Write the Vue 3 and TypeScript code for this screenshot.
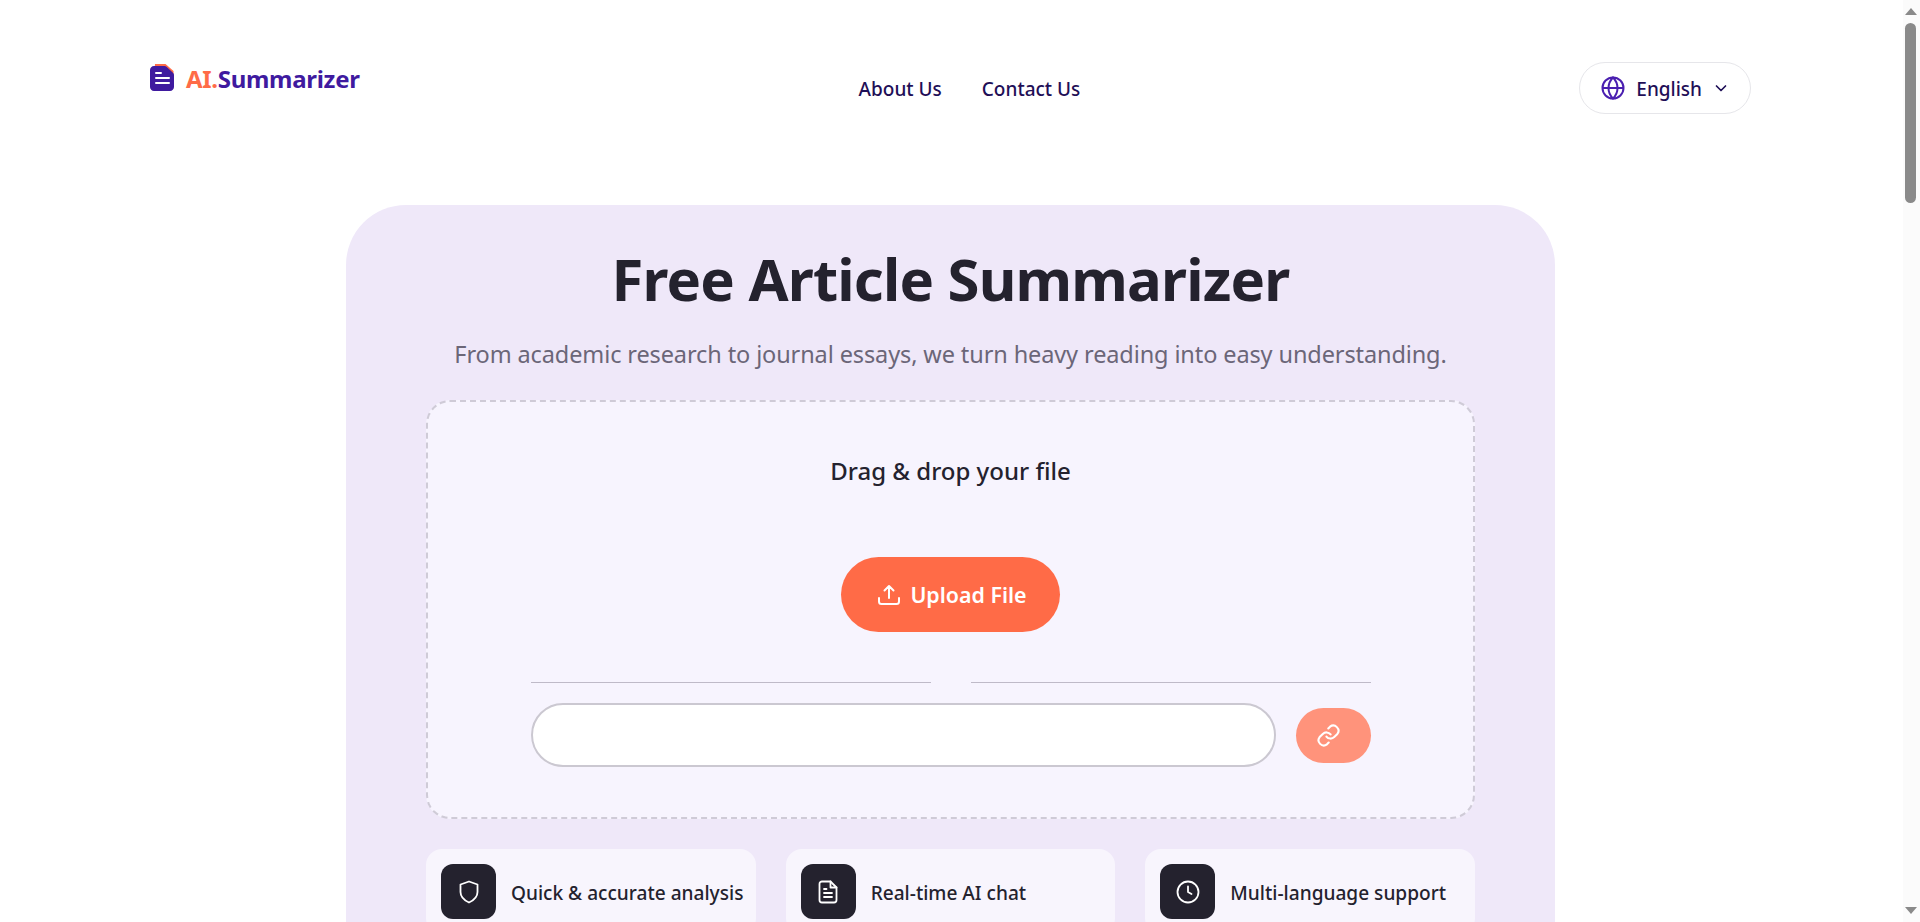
<template>
  <div class="page">
    <header class="topbar">
      <a class="logo" href="#">
        <svg class="logo-icon" width="25" height="28" viewBox="0 0 25 28" aria-hidden="true">
          <path d="M5 0h10.500l8 7v5H4z" fill="#ff6b47" />
          <path d="M4 2h10.500c.8 0 1.500.3 2 .8l6.700 6.200c.5.5.8 1.200.8 2V23c0 2.200-1.800 4-4 4H4c-2.200 0-4-1.800-4-4V6c0-2.200 1.800-4 4-4z" fill="#3f1a9f" />
          <path d="M6 9h5M6 14h13M6 19h13" stroke="#fff" stroke-width="2" stroke-linecap="round" fill="none" />
        </svg>
        <span class="logo-text"><span class="logo-ai">AI.</span>Summarizer</span>
      </a>
      <nav class="nav">
        <a href="#">About Us</a>
        <a href="#">Contact Us</a>
      </nav>
      <button class="lang" type="button">
        <svg width="24" height="24" viewBox="0 0 24 24" fill="none" stroke="#4a1fb0" stroke-width="2" aria-hidden="true">
          <circle cx="12" cy="12" r="10.500" />
          <path d="M1.500 12h21M12 1.500c3 3 4.500 6.500 4.500 10.500s-1.500 7.500-4.500 10.500c-3-3-4.500-6.500-4.500-10.500S9 4.500 12 1.500z" />
        </svg>
        <span class="lang-label">English</span>
        <svg class="chev" width="14" height="14" viewBox="0 0 14 14" fill="none" stroke="#1f0f57" stroke-width="1.700" stroke-linecap="round" stroke-linejoin="round" aria-hidden="true">
          <path d="M2.500 5l4.500 4.500L11.500 5" />
        </svg>
      </button>
    </header>

    <main class="hero">
      <h1>Free Article Summarizer</h1>
      <p class="sub">From academic research to journal essays, we turn heavy reading into easy understanding.</p>

      <section class="drop">
        <div class="drop-title">Drag &amp; drop your file</div>
        <button class="upload" type="button">
          <svg width="24" height="24" viewBox="0 0 24 24" fill="none" stroke="#fff" stroke-width="2" stroke-linecap="round" stroke-linejoin="round" aria-hidden="true">
            <path d="M12 15V3.500M7.500 7.500L12 3l4.500 4.500M2 15v3.500C2 20 3 21 4.500 21h15c1.500 0 2.500-1 2.500-2.500V15" />
          </svg>
          Upload File
        </button>
        <div class="or"><span></span><span></span></div>
        <div class="url-row">
          <input class="url" type="text" aria-label="Article URL" />
          <button class="go" type="button" aria-label="Submit link">
            <svg width="25" height="25" viewBox="0 0 24 24" fill="none" stroke="#fff" stroke-width="2" stroke-linecap="round" stroke-linejoin="round" aria-hidden="true">
              <path d="M10 13a5 5 0 0 0 7.500.5l3-3a5 5 0 0 0-7-7l-1.700 1.700" />
              <path d="M14 11a5 5 0 0 0-7.500-.5l-3 3a5 5 0 0 0 7 7l1.700-1.700" />
            </svg>
          </button>
        </div>
      </section>

      <section class="features">
        <div v-for="f in features" :key="f.label" class="feature">
          <div class="feature-icon">
            <svg width="24" height="24" viewBox="0 0 24 24" fill="none" stroke="#fff" stroke-width="1.800" stroke-linecap="round" stroke-linejoin="round" aria-hidden="true">
              <path v-for="d in f.paths" :key="d" :d="d" />
            </svg>
          </div>
          <span class="feature-label">{{ f.label }}</span>
        </div>
      </section>
    </main>

    <div class="scrollbar" aria-hidden="true">
      <i class="arrow up"></i>
      <i class="thumb"></i>
      <i class="arrow down"></i>
    </div>
  </div>
</template>

<script setup lang="ts">
interface Feature {
  label: string
  paths: string[]
}

const features: Feature[] = [
  {
    label: 'Quick & accurate analysis',
    paths: ['M12 1.500l8.500 3v7.500c0 5-3.600 8.300-8.500 10.500-4.900-2.200-8.500-5.500-8.500-10.500V4.500z'],
  },
  {
    label: 'Real-time AI chat',
    paths: [
      'M14.500 1.500H6a2.500 2.500 0 0 0-2.500 2.500v16A2.500 2.500 0 0 0 6 22.500h12a2.500 2.500 0 0 0 2.500-2.500V7.500z',
      'M14.500 1.500v6h6',
      'M8 9h2.500M8 13h8M8 17h8',
    ],
  },
  {
    label: 'Multi-language support',
    paths: ['M12 1.500a10.500 10.500 0 1 0 0 21a10.500 10.500 0 1 0 0-21z', 'M12 6.500V12l3.500 2'],
  },
]
</script>

<style scoped>
.page {
  padding-right: 17px;
  font-family: "Noto Sans", "Open Sans", sans-serif;
  color: #24222e;
}
.topbar {
  display: flex;
  justify-content: space-between;
  align-items: flex-start;
  padding: 62px 152px 0 150px;
}
.logo {
  display: flex;
  align-items: center;
  gap: 11px;
  padding-top: 1px;
  text-decoration: none;
}
.logo-icon {
  margin-top: -3px;
}
.logo-text {
  font-size: 24px;
  font-weight: 700;
  letter-spacing: -0.3px;
  color: #3f1a9f;
  line-height: 32px;
}
.logo-ai {
  color: #ff6b47;
}
.nav {
  display: flex;
  gap: 40px;
  padding-top: 14px;
}
.nav a {
  font-size: 19px;
  font-weight: 500;
  color: #1f0f57;
  text-decoration: none;
  line-height: 26px;
}
.lang {
  display: flex;
  align-items: center;
  gap: 11px;
  height: 52px;
  padding: 0 22px 0 21px;
  border: 1px solid #e6e6ea;
  border-radius: 26px;
  background: #fff;
  font: 500 19px "Noto Sans", sans-serif;
  color: #1f0f57;
}
.lang-label {
  padding-top: 1px;
}
.chev {
  margin-left: 1px;
}
.hero {
  width: 1209px;
  margin: 91px auto 0 346px;
  padding: 37px 80px 0;
  box-sizing: border-box;
  height: 900px;
  background: #efe8f9;
  border-radius: 60px;
}
h1 {
  margin: 0;
  text-align: center;
  font-size: 58px;
  letter-spacing: -0.8px;
  line-height: 74px;
  font-weight: 700;
  color: #24222e;
}
.sub {
  margin: 21px 0 0;
  text-align: center;
  font-size: 23.500px;
  letter-spacing: -0.11px;
  line-height: 34px;
  color: #6b6678;
}
.drop {
  margin-top: 29px;
  height: 419px;
  box-sizing: border-box;
  padding: 53px 103px 0;
  background: #f7f4fe;
  border: 2px dashed #cfcbd7;
  border-radius: 24px;
  display: flex;
  flex-direction: column;
  align-items: center;
}
.drop-title {
  font-size: 24px;
  font-weight: 500;
  line-height: 32px;
  color: #24222e;
}
.upload {
  margin-top: 70px;
  display: flex;
  align-items: center;
  gap: 9px;
  height: 75px;
  padding: 0 33px 0 36px;
  border: 0;
  border-radius: 38px;
  background: #ff6b47;
  color: #fff;
  font: 600 21.400px "Noto Sans", sans-serif;
}
.or {
  margin-top: 50px;
  width: 840px;
  display: flex;
  justify-content: space-between;
}
.or span {
  width: 400px;
  height: 1px;
  background: #bfbac8;
}
.url-row {
  margin-top: 20px;
  width: 840px;
  display: flex;
  align-items: center;
  gap: 20px;
}
.url {
  flex: 1;
  height: 64px;
  box-sizing: border-box;
  border: 2px solid #cbc8d1;
  border-radius: 32px;
  background: #fff;
}
.go {
  width: 75px;
  height: 55px;
  padding: 0 10px 0 0;
  border: 0;
  border-radius: 28px;
  background: #ff937b;
  display: flex;
  align-items: center;
  justify-content: center;
}
.features {
  margin-top: 30px;
  display: grid;
  grid-template-columns: repeat(3, 1fr);
  gap: 30px;
}
.feature {
  display: flex;
  align-items: center;
  gap: 15px;
  height: 85px;
  padding: 15px 0 15px 15px;
  box-sizing: border-box;
  background: #f8f5fd;
  border-radius: 16px;
  font-size: 19.100px;
  font-weight: 500;
  white-space: nowrap;
  color: #24222e;
}
.feature-label {
  padding-top: 3px;
}
.feature-icon {
  width: 55px;
  height: 55px;
  flex: none;
  display: flex;
  align-items: center;
  justify-content: center;
  background: #24222e;
  border-radius: 12px;
}
.scrollbar {
  position: fixed;
  top: 0;
  right: 0;
  bottom: 0;
  width: 17px;
  background: #fbfbfb;
}
.thumb {
  position: absolute;
  top: 23px;
  left: 2px;
  width: 11px;
  height: 180px;
  border-radius: 6px;
  background: #8a8a8a;
}
.arrow {
  position: absolute;
  left: 2px;
  width: 0;
  height: 0;
  border-left: 6.5px solid transparent;
  border-right: 6.5px solid transparent;
}
.arrow.up {
  top: 8px;
  border-bottom: 7px solid #8a8a8a;
}
.arrow.down {
  bottom: 8px;
  border-top: 7px solid #8a8a8a;
}
</style>

<style>
body {
  background: #fff;
}
</style>
